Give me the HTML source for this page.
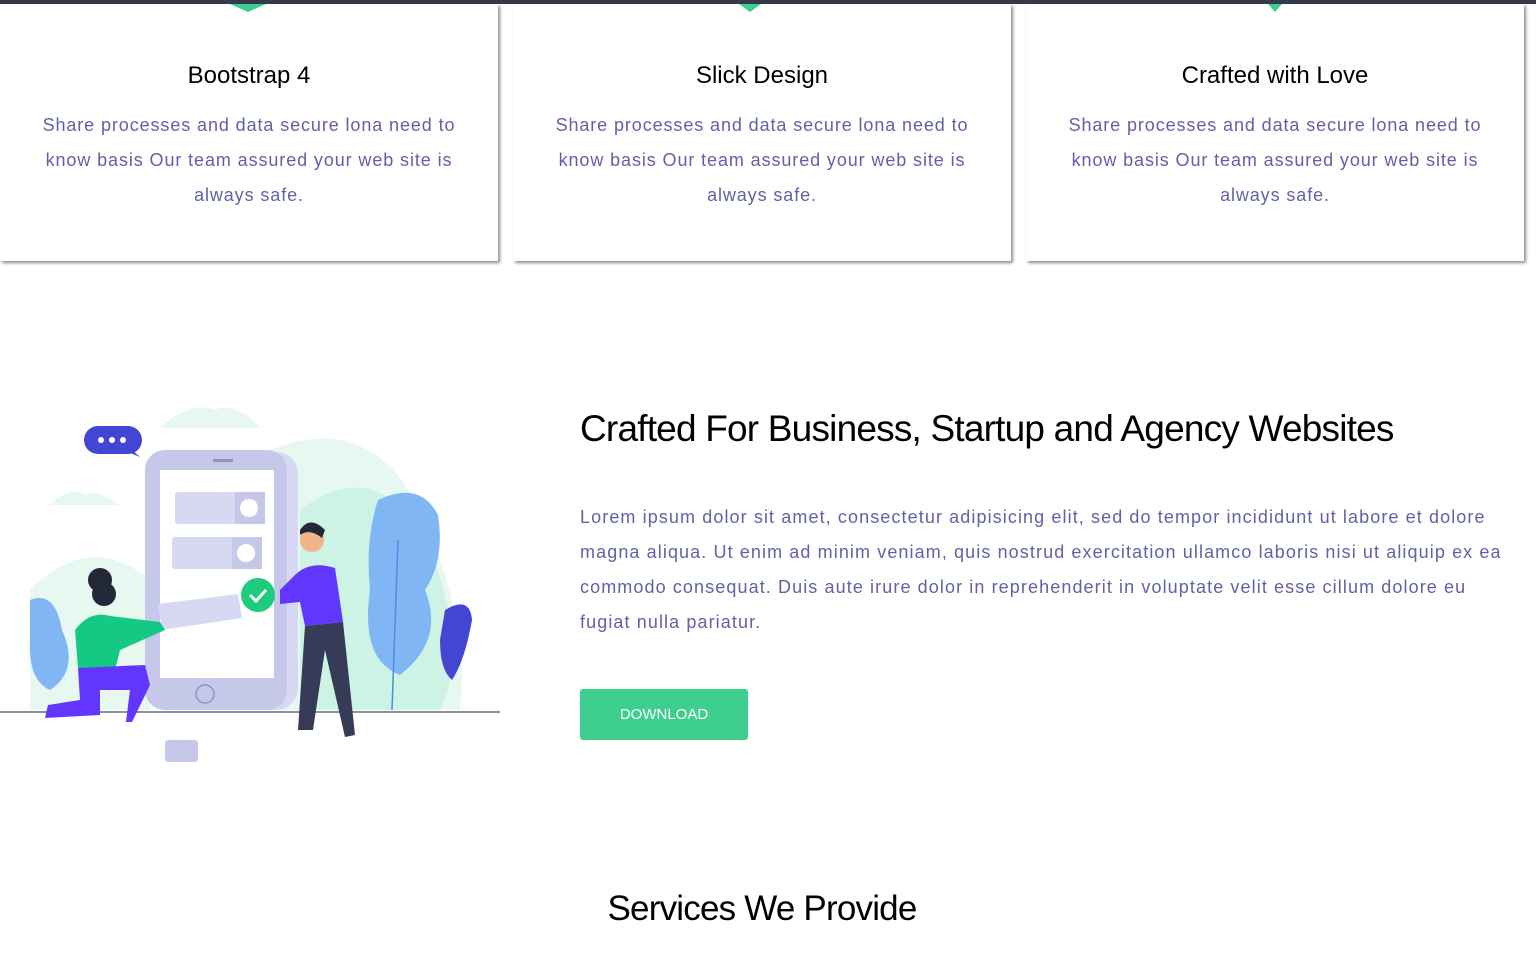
<!DOCTYPE html>
<html><head><style>
body{margin:0;width:1536px;height:968px;overflow:hidden;background:#fff;font-family:"Liberation Sans",sans-serif;position:relative}
.bar{position:absolute;left:0;top:0;width:1536px;height:4px;background:#343a48}
.card{position:absolute;top:4px;width:498px;height:257px;background:#fff;box-shadow:2px 2px 3px rgba(0,0,0,.45);text-align:center}
.card h3{margin:0;position:absolute;top:58px;width:100%;font-size:24px;font-weight:normal;color:#000;letter-spacing:0px}
.card p{position:absolute;top:104px;left:20px;right:20px;margin:0;font-size:18px;line-height:35px;color:#5f62a8;letter-spacing:0.9px}
.tip{position:absolute;top:0;width:36px;height:8px;background:#3ecf8e;clip-path:polygon(0 0,100% 0,50% 100%)}
h2{position:absolute;margin:0;font-weight:normal;color:#000;letter-spacing:-0.8px}
.para{position:absolute;left:580px;top:500px;width:930px;font-size:18px;line-height:35px;color:#5f62a8;margin:0;letter-spacing:1.1px}
.btn{position:absolute;left:580px;top:689px;width:168px;height:51px;background:#3ecf8e;border-radius:3px;color:#fff;font-size:15px;text-align:center;line-height:51px}
</style></head><body>
<div class="bar"></div>
<div class="card" style="left:0"><div class="tip" style="left:230px"></div><h3>Bootstrap 4</h3><p>Share processes and data secure lona need to know basis Our team assured your web site is always safe.</p></div>
<div class="card" style="left:513px"><div class="tip" style="left:226px;width:22px"></div><h3>Slick Design</h3><p>Share processes and data secure lona need to know basis Our team assured your web site is always safe.</p></div>
<div class="card" style="left:1026px"><div class="tip" style="left:242px;width:14px"></div><h3>Crafted with Love</h3><p>Share processes and data secure lona need to know basis Our team assured your web site is always safe.</p></div>

<svg style="position:absolute;left:0;top:390px" width="500" height="380" viewBox="0 0 500 380">
<path d="M160 38 Q190 10 215 20 Q235 10 260 38Z" fill="#e6f8f0"/>
<path d="M50 115 Q70 95 85 105 Q100 98 118 115Z" fill="#e6f8f0"/>
<path d="M270 60 Q370 20 420 120 Q470 230 460 320 L270 320Z" fill="#e6f8f0"/>
<path d="M300 120 Q380 60 430 160 Q470 260 440 320 L300 320Z" fill="#cdf3e4"/>
<path d="M30 200 Q90 140 150 190 L150 320 L30 320Z" fill="#e6f8f0"/>
<rect x="84" y="36" width="58" height="28" rx="14" fill="#4545d4"/>
<path d="M132 60 L140 67 L128 62Z" fill="#4545d4"/>
<circle cx="101" cy="50" r="3" fill="#fff"/><circle cx="112" cy="50" r="3" fill="#fff"/><circle cx="123" cy="50" r="3" fill="#fff"/>
<rect x="155" y="62" width="143" height="258" rx="22" fill="#d7d9f2"/>
<rect x="145" y="60" width="142" height="260" rx="20" fill="#c5c8e8"/>
<rect x="160" y="80" width="114" height="208" fill="#fff"/>
<rect x="213" y="69" width="20" height="3" fill="#8f94c7"/>
<circle cx="205" cy="304" r="9" fill="none" stroke="#8f94c7" stroke-width="1.5"/>
<rect x="175" y="102" width="90" height="32" rx="3" fill="#d7d9f2"/><rect x="235" y="102" width="30" height="32" fill="#c5c8e8"/><circle cx="249" cy="118" r="9" fill="#fff"/>
<rect x="172" y="147" width="90" height="32" rx="3" fill="#d7d9f2"/><rect x="232" y="147" width="30" height="32" fill="#c5c8e8"/><circle cx="246" cy="163" r="9" fill="#fff"/>
<path d="M158 214 L238 204 L242 228 L162 240Z" fill="#d7d9f2"/>
<path d="M378 110 Q420 90 438 125 Q445 170 425 200 Q445 250 400 285 Q360 270 370 200 Q365 150 378 110Z" fill="#7fb6f3"/>
<path d="M398 150 L392 320" stroke="#4c8be0" stroke-width="1.5"/>
<path d="M445 220 Q470 205 472 230 Q465 270 452 290 Q440 280 440 250Z" fill="#4545d4"/>
<path d="M30 210 Q55 200 62 240 Q80 280 50 300 Q28 290 30 250Z" fill="#7fb6f3"/>
<line x1="0" y1="322" x2="500" y2="322" stroke="#666a80" stroke-width="1.5"/>
<circle cx="258" cy="205" r="17" fill="#1ecc7c"/><path d="M250 205 L256 211 L266 200" stroke="#fff" stroke-width="3" fill="none"/>
<circle cx="100" cy="190" r="12" fill="#222838"/><circle cx="104" cy="204" r="12" fill="#222838"/>
<path d="M75 240 Q90 220 110 226 L160 232 L165 240 L120 260 L115 280 L78 278Z" fill="#13c983"/>
<path d="M78 278 L145 275 L150 295 L132 332 L126 332 L130 300 L100 300 L100 325 L45 328 L48 315 L80 310Z" fill="#6236ff"/>
<circle cx="312" cy="150" r="12" fill="#f1b48a"/><path d="M300 140 Q310 125 325 140 L322 148 Q310 138 300 145Z" fill="#222838"/>
<path d="M295 185 Q310 170 335 178 L343 232 L305 236 L300 212 L280 214 L280 200Z" fill="#6236ff"/>
<path d="M305 236 L343 232 L355 345 L345 347 L325 260 L313 340 L298 340Z" fill="#363c58"/>
<rect x="165" y="350" width="33" height="22" rx="3" fill="#c5c8e8"/>
</svg>

<h2 style="left:580px;top:408px;font-size:37px">Crafted For Business, Startup and Agency Websites</h2>
<p class="para">Lorem ipsum dolor sit amet, consectetur adipisicing elit, sed do tempor incididunt ut labore et dolore magna aliqua. Ut enim ad minim veniam, quis nostrud exercitation ullamco laboris nisi ut aliquip ex ea commodo consequat. Duis aute irure dolor in reprehenderit in voluptate velit esse cillum dolore eu fugiat nulla pariatur.</p>
<div class="btn">DOWNLOAD</div>
<h2 style="left:0;width:1524px;text-align:center;top:889px;font-size:35px">Services We Provide</h2>
</body></html>
